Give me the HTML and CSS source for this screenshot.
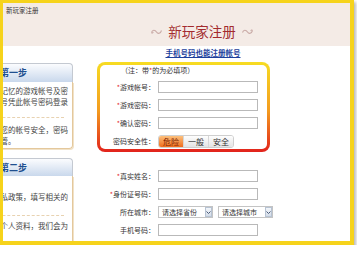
FILE: index.html
```html
<!DOCTYPE html>
<html>
<head>
  <title>新玩家注册</title>
  <meta name="viewport" content="width=device-width, initial-scale=1.0">
  <link rel="stylesheet" href="styles.css">
</head>
<body>

  <div class="frame">
    <div class="top">
      <div class="top-title">新玩家注册</div>
      <h1 class="heading">
        <svg class="swirl" viewBox="0 0 12 7"><path d="M1 4.5 C2 1.5 4.5 1.5 6 4 C7.5 6.5 10 5.5 11 2.5 M1 4.5 C1.5 5.5 2.8 5 2.5 4"/></svg>
        新玩家注册
        <svg class="swirl" viewBox="0 0 12 7"><path d="M1 4.5 C2 1.5 4.5 1.5 6 4 C7.5 6.5 10 5.5 11 2.5 M11 2.5 C10.5 1.5 9.2 2 9.5 3"/></svg>
      </h1>
    </div>

    <div class="content">
      <div class="side">
        <div class="step">
          <div class="step-head">第一步</div>
          <div class="step-body">
            <p class="step-text">请您牢记忆的游戏帐号及密<br>游戏帐号凭此帐号密码登录</p>
            <p class="step-text step-split">为保障您的帐号安全，密码<br>妥善保管。</p>
          </div>
        </div>
        <div class="step step-two">
          <div class="step-head">第二步</div>
          <div class="step-body">
            <p class="step-text">阅读隐私政策，填写相关的</p>
            <p class="step-text step-split">准确的个人资料，我们会为</p>
          </div>
        </div>
      </div>

      <div class="main">
        <a class="mobile-link" href="#">手机号码也能注册帐号</a>

        <div class="required-box form-rows">
          <div class="note">（注：带<span class="star">*</span>的为必填项）</div>
          <div class="row"><label class="label"><span class="star">*</span>游戏帐号：</label><input class="field" type="text"></div>
          <div class="row"><label class="label"><span class="star">*</span>游戏密码：</label><input class="field" type="password"></div>
          <div class="row"><label class="label"><span class="star">*</span>确认密码：</label><input class="field" type="password"></div>
          <div class="row">
            <span class="label">密码安全性：</span>
            <div class="strength">
              <span class="level level-on">危险</span>
              <span class="level">一般</span>
              <span class="level">安全</span>
            </div>
          </div>
        </div>

        <div class="extra form-rows">
          <div class="row"><label class="label"><span class="star">*</span>真实姓名：</label><input class="field" type="text"></div>
          <div class="row"><label class="label"><span class="star">*</span>身份证号码：</label><input class="field" type="text"></div>
          <div class="row">
            <span class="label">所在城市：</span>
            <div class="select"><span>请选择省份</span><span class="arrow"><svg viewBox="0 0 5 3"><path d="M0.5 0.5 L2.5 2.5 L4.5 0.5"/></svg></span></div>
            <div class="select"><span>请选择城市</span><span class="arrow"><svg viewBox="0 0 5 3"><path d="M0.5 0.5 L2.5 2.5 L4.5 0.5"/></svg></span></div>
          </div>
          <div class="row"><label class="label">手机号码：</label><input class="field" type="text"></div>
        </div>
      </div>
    </div>
  </div>

</body>
</html>
```

FILE: styles.css
```css
body {
  margin: 0;
  background: #fff;
  font-family: "Noto Sans CJK SC", "Liberation Sans", sans-serif;
  color: #333;
}
.frame {
  width: 347px;
  height: 238px;
  margin: -1px 0 0 -1px;
  border: 4px solid #f6d31b;
  overflow: hidden;
  background: #fff;
  box-shadow: 2px 3px 3px rgba(0,0,0,0.28);
}
.top {
  height: 43px;
  background: #f4ebe6;
}
.top-title {
  font-size: 6.5px;
  line-height: 8px;
  padding: 3px 0 0 3px;
}
.heading {
  margin: 9px 0 0;
  padding-left: 51px;
  display: flex;
  justify-content: center;
  align-items: center;
  font-size: 13.5px;
  line-height: 17px;
  font-weight: normal;
  color: #a32b2e;
}
.swirl {
  width: 13px;
  height: 7px;
  margin: 0 5px;
  fill: none;
  stroke: #c9aaa6;
  stroke-width: 1.1;
}
.content {
  display: flex;
}
.side {
  width: 70px;
  flex: none;
  padding-top: 17px;
}
.step {
  width: 106px;
  margin-left: -36px;
}
.step-head {
  height: 19px;
  box-sizing: border-box;
  border: 1px solid #c4c9d1;
  border-bottom: none;
  border-radius: 0 4px 0 0;
  background: linear-gradient(#fbfcfe, #c9d8ec);
  padding-left: 32px;
  font-size: 9px;
  line-height: 18px;
  font-weight: bold;
  color: #1f4f8f;
}
.step-body {
  border: 1px solid #e4c89c;
  border-top: none;
  border-radius: 0 0 4px 0;
  padding: 3px 0 2px 10px;
  font-size: 7.5px;
  line-height: 11px;
  color: #444;
  white-space: nowrap;
  box-shadow: 1px 1px 0 #f1e2c8;
}
.step-text {
  margin: 0;
}
.step-split {
  margin: 10px 8px 0 0;
  padding-top: 6px;
  border-top: 1px dashed #e8d2b0;
}
.step-two {
  margin-top: 9px;
}
.step-two .step-head {
  height: 18px;
  line-height: 17px;
}
.step-two .step-body {
  height: 80px;
  padding-top: 15px;
  border-bottom: none;
  border-radius: 0;
}
.step-two .step-split {
  margin-top: 13px;
  padding-top: 4px;
}
.main {
  flex: 1;
}
.mobile-link {
  display: block;
  margin: 2px 17px 0 0;
  text-align: center;
  font-size: 7.5px;
  line-height: 10px;
  font-weight: bold;
  color: #1d3f9c;
  text-decoration: underline;
}
.form-rows {
  display: flex;
  flex-direction: column;
  gap: 6px;
}
.required-box {
  width: 173px;
  box-sizing: border-box;
  margin: 4px 0 0 24px;
  border: 3px solid transparent;
  border-radius: 8px;
  background: linear-gradient(#fff, #fff) padding-box,
              linear-gradient(#f7dc22, #f39a1f 55%, #e2221c) border-box;
  padding-bottom: 2px;
}
.note {
  font-size: 7px;
  line-height: 10px;
  padding-left: 21px;
}
.row {
  display: flex;
  align-items: center;
  height: 12px;
}
.label {
  width: 55px;
  flex: none;
  margin-right: 3px;
  text-align: right;
  font-size: 7px;
  line-height: 12px;
  white-space: nowrap;
}
.star {
  color: #e3262b;
}
.field {
  width: 100px;
  height: 12px;
  box-sizing: border-box;
  margin: 0;
  padding: 0;
  border: 1px solid #b9b9b9;
  background: #fff;
}
.strength {
  display: flex;
  height: 13px;
  box-sizing: border-box;
  border: 1px solid #cfcfcf;
  border-radius: 3px;
  overflow: hidden;
}
.level {
  width: 24px;
  text-align: center;
  font-size: 8px;
  line-height: 11px;
  color: #333;
  background: linear-gradient(#fefefe, #e3e3e3);
  border-left: 1px solid #d6d6d6;
}
.level-on {
  background: linear-gradient(#fcc07c, #ef6c1c);
  color: #7b2300;
  border-left: none;
}
.extra {
  margin: 18px 0 0 27px;
}
.select {
  display: flex;
  align-items: center;
  justify-content: space-between;
  width: 55px;
  height: 12px;
  box-sizing: border-box;
  border: 1px solid #c4c4c4;
  padding-left: 3px;
  font-size: 7px;
  line-height: 10px;
}
.select + .select {
  margin-left: 5px;
}
.arrow {
  display: flex;
  align-items: center;
  justify-content: center;
  width: 7px;
  height: 10px;
  box-sizing: border-box;
  border: 1px solid #b7c3d3;
  background: linear-gradient(#f3f6fa, #d3dce8);
}
.arrow svg {
  width: 5px;
  height: 3px;
  fill: none;
  stroke: #4b5b78;
  stroke-width: 1;
}
```
